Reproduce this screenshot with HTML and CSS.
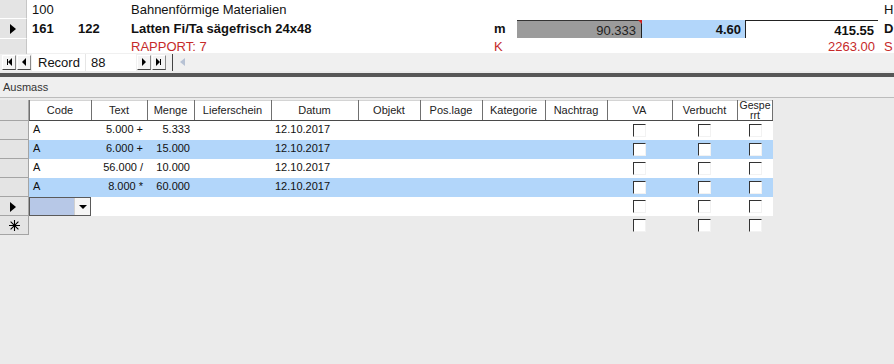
FILE: index.html
```html
<!DOCTYPE html>
<html lang="de">
<head>
<meta charset="UTF-8">
<title>Ausmass</title>
<link rel="stylesheet" href="styles.css">
</head>
<body>
    <div class="main">
        <div class="mrow r1">
            <div class="sel"></div>
            <div class="c">100</div>
            <div class="c"></div>
            <div class="c">Bahnenförmige Materialien</div>
            <div class="c"></div>
            <div class="c"></div>
            <div class="c"></div>
            <div class="c"></div>
            <div class="c">H</div>
        </div>
        <div class="mrow r2">
            <div class="sel"><span class="arrow"></span></div>
            <div class="c">161</div>
            <div class="c">122</div>
            <div class="c">Latten Fi/Ta sägefrisch 24x48</div>
            <div class="c">m</div>
            <div class="fld grey">90.333<i class="mark"></i></div>
            <div class="fld blue">4.60</div>
            <div class="fld white">415.55</div>
            <div class="c">D</div>
        </div>
        <div class="mrow r3">
            <div class="sel"></div>
            <div class="c"></div>
            <div class="c"></div>
            <div class="c">RAPPORT: 7</div>
            <div class="c">K</div>
            <div class="c"></div>
            <div class="c"></div>
            <div class="c num">2263.00</div>
            <div class="c">S</div>
        </div>
    </div>

    <div class="nav">
        <span class="btn"><b class="tri-l bar-l"></b></span>
        <span class="btn"><b class="tri-l"></b></span>
        <span class="rec">Record</span>
        <span class="recno">88</span>
        <span class="btn"><b class="tri-r"></b></span>
        <span class="btn"><b class="tri-r bar-r"></b></span>
        <span class="scroll"><b class="sc-arrow"></b></span>
    </div>

    <div class="split"></div>

    <div class="sub">
        <div class="sub-title">Ausmass</div>
        <table class="sheet">
            <colgroup>
                <col style="width:29px">
                <col style="width:62px">
                <col style="width:56px">
                <col style="width:47px">
                <col style="width:77px">
                <col style="width:87px">
                <col style="width:62px">
                <col style="width:62px">
                <col style="width:63px">
                <col style="width:62px">
                <col style="width:65px">
                <col style="width:65px">
                <col style="width:36px">
            </colgroup>
            <thead>
                <tr>
                    <th class="rs"></th>
                    <th>Code</th>
                    <th>Text</th>
                    <th>Menge</th>
                    <th>Lieferschein</th>
                    <th>Datum</th>
                    <th>Objekt</th>
                    <th>Pos.lage</th>
                    <th>Kategorie</th>
                    <th>Nachtrag</th>
                    <th>VA</th>
                    <th>Verbucht</th>
                    <th class="wrap"><div class="clip">Gesperrt</div></th>
                </tr>
            </thead>
            <tbody>
                <tr>
                    <td class="rs"></td>
                    <td>A</td>
                    <td class="r">5.000 +</td>
                    <td class="r">5.333</td>
                    <td></td>
                    <td>12.10.2017</td>
                    <td></td><td></td><td></td><td></td>
                    <td class="ck"><span class="cb"></span></td>
                    <td class="ck"><span class="cb"></span></td>
                    <td class="ck"><span class="cb"></span></td>
                </tr>
                <tr class="alt">
                    <td class="rs"></td>
                    <td>A</td>
                    <td class="r">6.000 +</td>
                    <td class="r">15.000</td>
                    <td></td>
                    <td>12.10.2017</td>
                    <td></td><td></td><td></td><td></td>
                    <td class="ck"><span class="cb"></span></td>
                    <td class="ck"><span class="cb"></span></td>
                    <td class="ck"><span class="cb"></span></td>
                </tr>
                <tr>
                    <td class="rs"></td>
                    <td>A</td>
                    <td class="r">56.000 /</td>
                    <td class="r">10.000</td>
                    <td></td>
                    <td>12.10.2017</td>
                    <td></td><td></td><td></td><td></td>
                    <td class="ck"><span class="cb"></span></td>
                    <td class="ck"><span class="cb"></span></td>
                    <td class="ck"><span class="cb"></span></td>
                </tr>
                <tr class="alt">
                    <td class="rs"></td>
                    <td>A</td>
                    <td class="r">8.000 *</td>
                    <td class="r">60.000</td>
                    <td></td>
                    <td>12.10.2017</td>
                    <td></td><td></td><td></td><td></td>
                    <td class="ck"><span class="cb"></span></td>
                    <td class="ck"><span class="cb"></span></td>
                    <td class="ck"><span class="cb"></span></td>
                </tr>
                <tr class="cur">
                    <td class="rs"><span class="arrow"></span></td>
                    <td class="combo"><span class="combo-box"><span class="combo-btn"><b></b></span></span></td>
                    <td></td><td></td><td></td><td></td>
                    <td></td><td></td><td></td><td></td>
                    <td class="ck"><span class="cb"></span></td>
                    <td class="ck"><span class="cb"></span></td>
                    <td class="ck"><span class="cb"></span></td>
                </tr>
                <tr class="new">
                    <td class="rs star">
                        <svg width="11" height="11" viewBox="0 0 11 11">
                            <path d="M5.5 0V11M0 5.5H11M1.6 1.6L9.4 9.4M9.4 1.6L1.6 9.4" stroke="#000" stroke-width="1.1" fill="none"/>
                        </svg>
                    </td>
                    <td></td><td></td><td></td><td></td><td></td>
                    <td></td><td></td><td></td><td></td>
                    <td class="ck"><span class="cb"></span></td>
                    <td class="ck"><span class="cb"></span></td>
                    <td class="ck"><span class="cb"></span></td>
                </tr>
            </tbody>
        </table>
    </div>
</body>
</html>
```

FILE: styles.css
```css
body {
    margin: 0;
    background: #ebebeb;
    font-family: "Liberation Sans", Arial, sans-serif;
    color: #111;
}

/* top form */
.main {
    background: #fff;
}
.mrow {
    display: grid;
    grid-template-columns: 28px 46px 53px 363px 27px 125px 103px 133px 1fr;
    font-size: 13px;
}
.r1 {
    height: 19px;
    line-height: 19px;
}
.r2 {
    height: 20px;
    line-height: 20px;
    font-weight: bold;
}
.r3 {
    height: 14px;
    line-height: 15px;
    color: #c62a2a;
}
.mrow .c {
    padding-left: 4px;
    white-space: nowrap;
    overflow: hidden;
}
.mrow .c:last-child {
    padding-left: 6px;
    overflow: visible;
}
.r3 .num {
    text-align: right;
    padding: 0 3px 0 0;
}
.sel {
    background: #e4e4e4;
    border-right: 1px solid #c6c6c6;
    border-bottom: 1px solid #fff;
    width: 27px;
    box-sizing: border-box;
    position: relative;
}
.r3 .sel {
    border-bottom: 0;
}
.arrow {
    position: absolute;
    left: 10px;
    top: 50%;
    margin-top: -5px;
    border: 5px solid transparent;
    border-left: 6px solid #000;
    border-right: 0;
}
.fld {
    margin-top: 1px;
    height: 18px;
    line-height: 19px;
    text-align: right;
    padding-right: 4px;
    box-sizing: border-box;
    position: relative;
}
.grey {
    background: #9b9b9b;
    color: #222;
    font-weight: normal;
    border-top: 1px solid #333;
    border-right: 1px solid #222;
    padding-right: 5px;
}
.blue {
    background: #b2d6fa;
}
.white {
    border-top: 1px solid #222;
    border-left: 1px solid #222;
}
.mark {
    position: absolute;
    right: -1px;
    top: -1px;
    border-top: 4px solid #d42020;
    border-left: 4px solid transparent;
}

/* navigation bar */
.nav {
    display: flex;
    align-items: center;
    height: 18px;
    background: #f0f0f0;
    font-size: 13px;
    padding-left: 2px;
}
.btn {
    width: 14px;
    height: 15px;
    border: 1px solid #8a8a8a;
    border-top-color: #fff;
    border-left-color: #fff;
    background: #f4f4f4;
    display: flex;
    align-items: center;
    justify-content: center;
    box-sizing: border-box;
    margin-right: 1px;
    border-bottom: 1px solid #444;
}
.btn b {
    display: block;
    border: 4px solid transparent;
}
.tri-l {
    border-right: 4px solid #000 !important;
    border-left: 0 !important;
}
.tri-r {
    border-left: 4px solid #000 !important;
    border-right: 0 !important;
}
.bar-l {
    box-shadow: -2px 0 0 -1px #000;
    margin-left: 2px;
}
.bar-r {
    box-shadow: 2px 0 0 -1px #000;
    margin-right: 2px;
}
.rec {
    width: 47px;
    padding-left: 6px;
    background: #fff;
    height: 17px;
    line-height: 17px;
    border-right: 1px solid #e6e6e6;
}
.recno {
    width: 45px;
    padding-left: 5px;
    height: 17px;
    line-height: 17px;
    background: #fff;
    margin-right: 1px;
}
.scroll {
    flex: 1;
    height: 17px;
    margin-left: 5px;
    position: relative;
    border-left: 1px solid #444;
    padding-left: 6px;
}
.sc-arrow {
    position: absolute;
    left: 7px;
    top: 4px;
    border: 4px solid transparent;
    border-right: 5px solid #b7c2d4;
    border-left: 0;
}

.split {
    margin-top: 2px;
    height: 4px;
    background: #575757;
}

/* subform */
.sub-title {
    height: 20px;
    line-height: 21px;
    font-size: 11px;
    color: #333;
    padding-left: 3px;
    border-bottom: 1px solid #bcbcbc;
    background: #efefef;
}
.sheet {
    margin-top: 2px;
    border-collapse: separate;
    border-spacing: 0;
    table-layout: fixed;
    width: 773px;
    font-size: 11px;
}
.sheet th {
    height: 20px;
    padding: 0 2px;
    background: #fff;
    font-weight: normal;
    color: #222;
    border-bottom: 1px solid #4a4a4a;
    box-shadow: inset 1px 0 #707070, inset 0 1px #d4d4d4;
    white-space: nowrap;
    overflow: hidden;
    line-height: 20px;
}
.sheet th.wrap {
    vertical-align: top;
    padding: 0 1px;
    overflow: visible;
    box-shadow: inset 1px 0 #707070, inset -1px 0 #707070, inset 0 1px #d4d4d4;
}
.clip {
    height: 20px;
    white-space: normal;
    word-break: break-all;
    line-height: 10px;
    font-size: 10.5px;
}
.sheet td {
    height: 19px;
    padding: 0 4px;
    background: #fff;
    white-space: nowrap;
    overflow: hidden;
    line-height: 17px;
    vertical-align: top;
    box-sizing: border-box;
}
.sheet .alt td {
    background: #b2d6fa;
}
.sheet td.r {
    text-align: right;
}
.sheet .rs {
    background: #e4e4e4 !important;
    box-shadow: inset -1px 0 #a4a4a4, inset 0 -1px #a4a4a4;
    position: relative;
    padding: 0;
}
.sheet th.rs {
    border-bottom: 1px solid #a4a4a4;
    box-shadow: inset -1px 0 #a4a4a4;
}
.sheet .new td {
    background: #ebebeb;
}
.star svg {
    display: block;
    margin: 4px auto 0;
}
.cb {
    display: block;
    width: 13px;
    height: 13px;
    margin: 3px auto 0;
    background: #fff;
    border-top: 1px solid #333;
    border-left: 1px solid #333;
    border-right: 1px solid #f2f2f2;
    border-bottom: 1px solid #f2f2f2;
    box-sizing: border-box;
}
.combo {
    padding: 0 !important;
}
.combo-box {
    display: block;
    height: 19px;
    background: #b7c8e7;
    border: 1px solid #5a5a5a;
    box-sizing: border-box;
    position: relative;
}
.combo-btn {
    position: absolute;
    right: 0;
    top: 0;
    width: 15px;
    height: 17px;
    background: #f5f5f5;
    border-left: 1px solid #d0d0d0;
    display: flex;
    align-items: center;
    justify-content: center;
}
.combo-btn b {
    border: 4px solid transparent;
    border-top: 4px solid #000;
    border-bottom: 0;
    margin-top: 1px;
}
```
